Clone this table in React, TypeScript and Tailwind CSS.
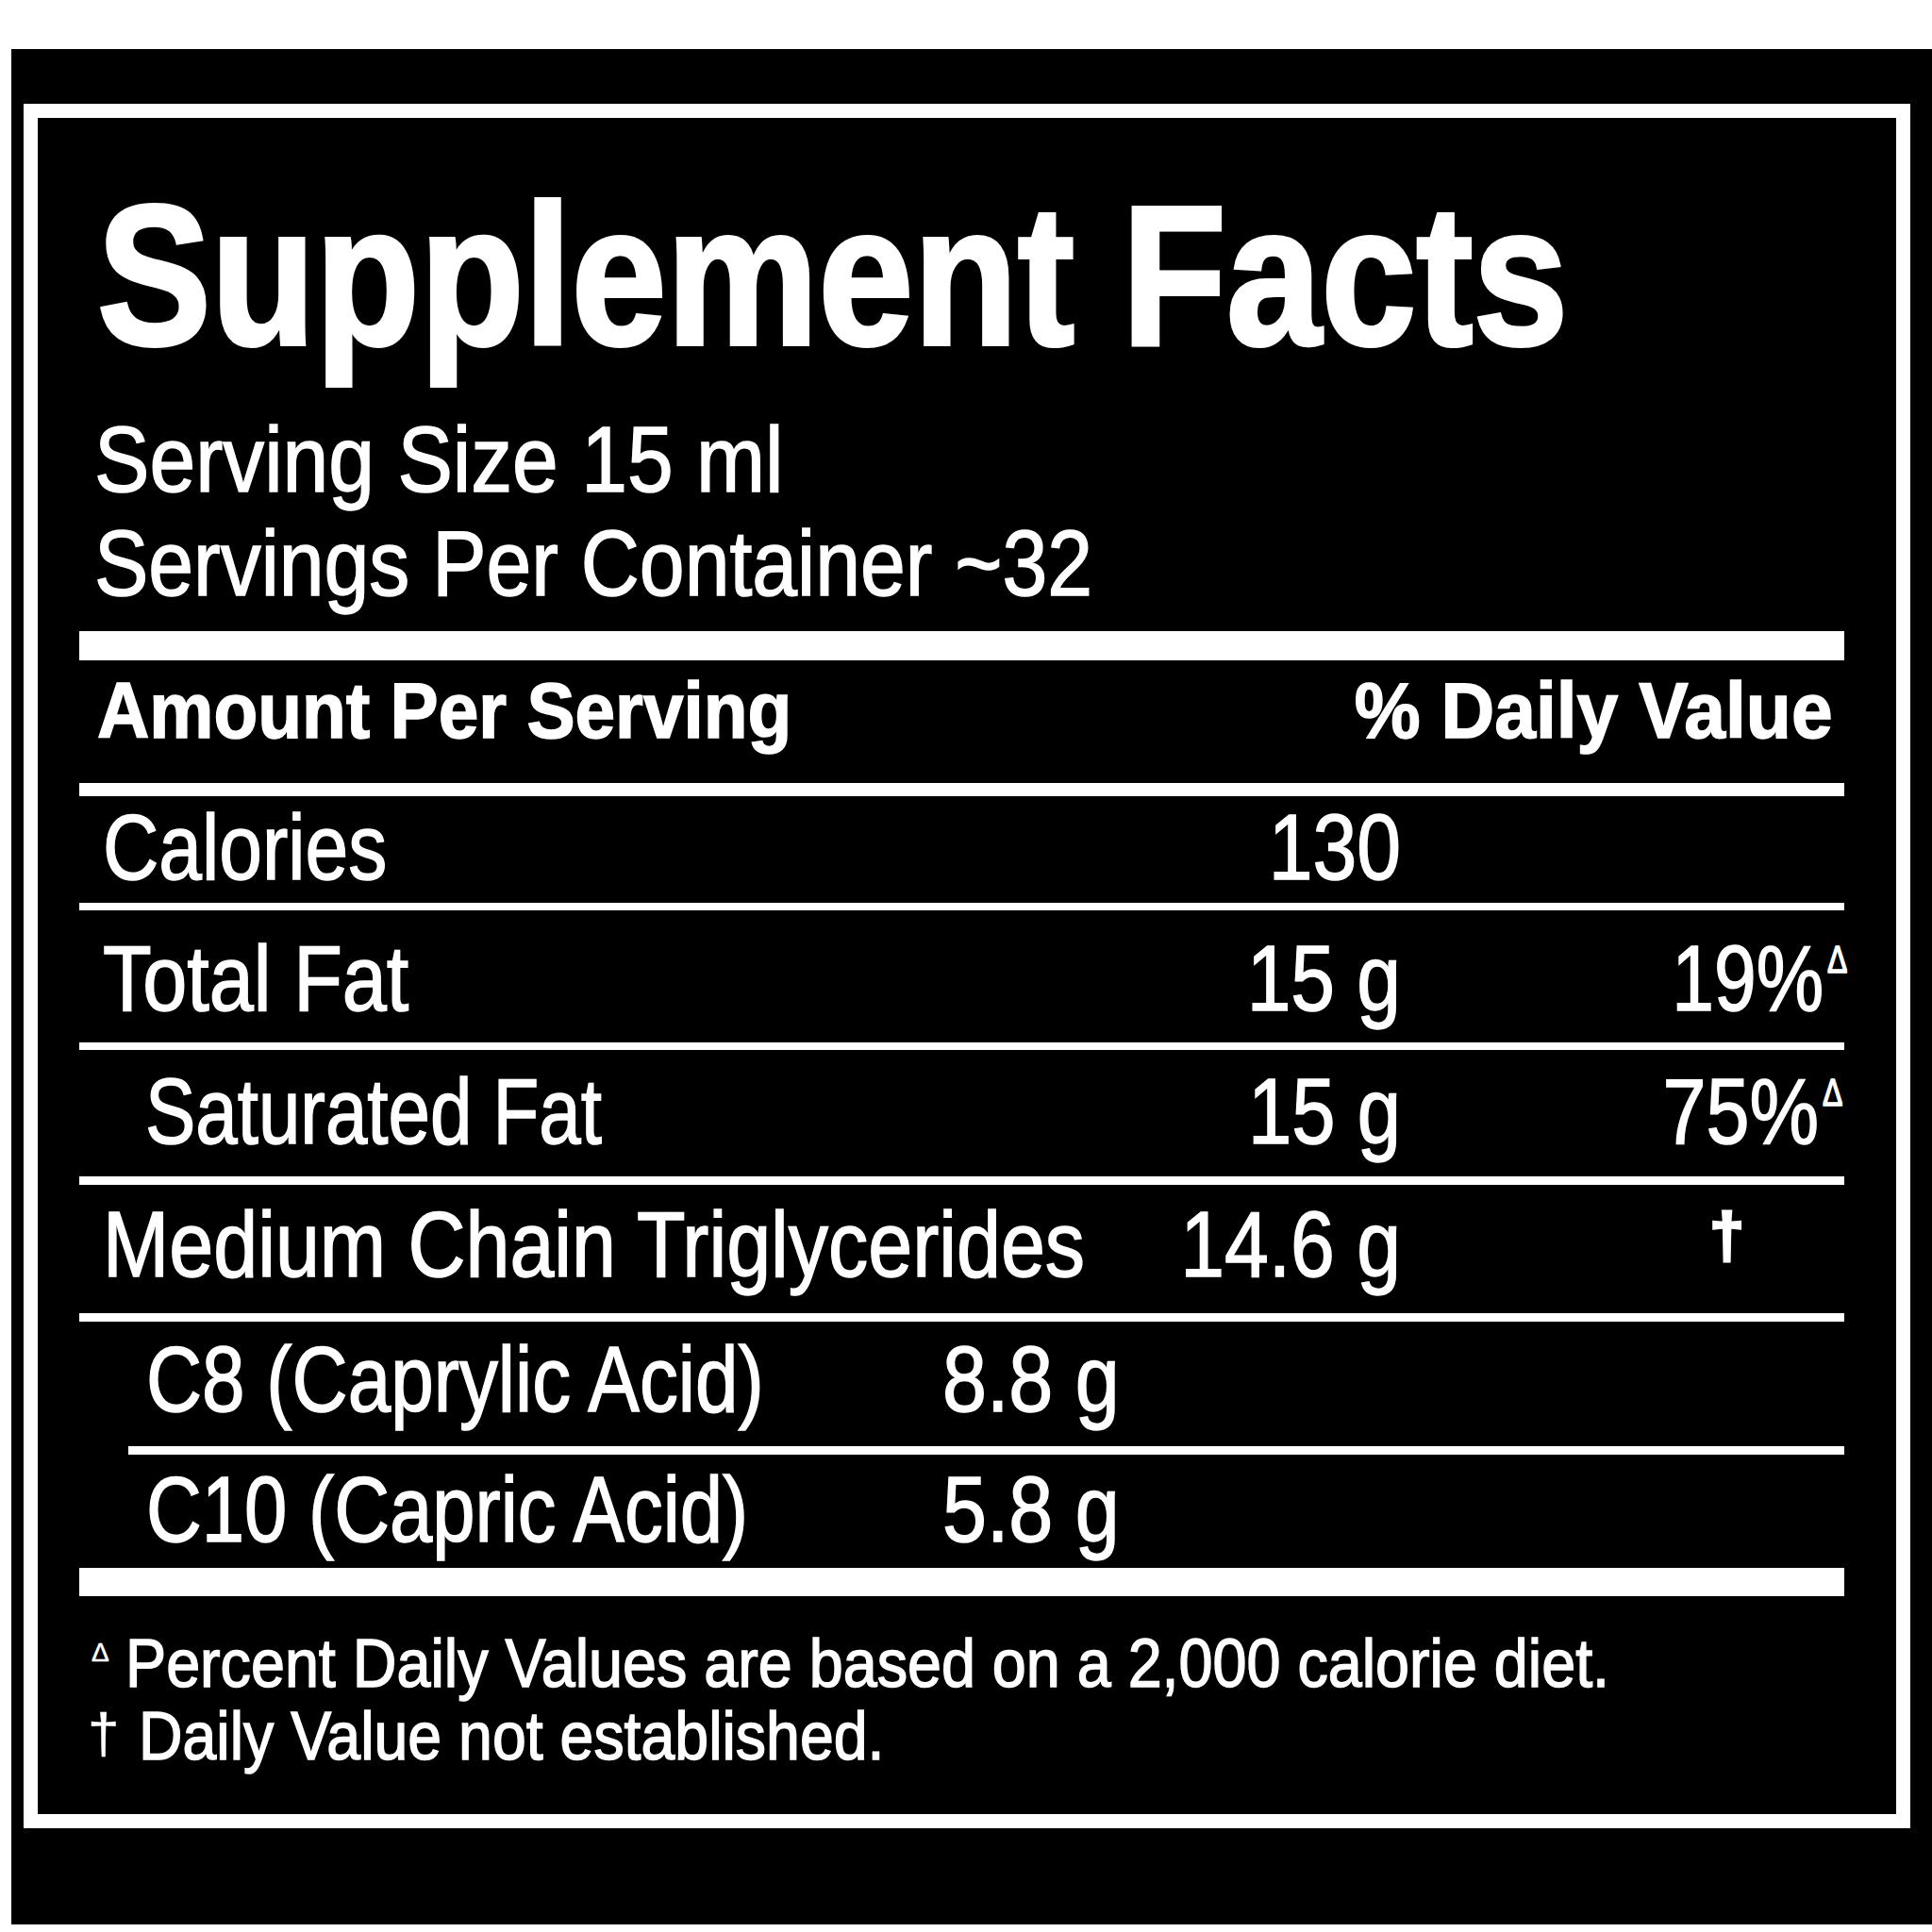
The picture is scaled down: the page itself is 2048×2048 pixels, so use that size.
import type { ReactNode } from 'react';

const font = "font-['Liberation_Sans_Narrow','Arial_Narrow','Liberation_Sans',sans-serif]";

function Rule({ className }: { className: string }) {
  return <div className={`bg-white ${className}`} />;
}

// name column shrinks to its slot; the text is squeezed horizontally to look condensed
function Row({
  className,
  name,
  nameScale,
  amount,
  amountScale,
  children,
}: {
  className: string;
  name: string;
  nameScale: string;
  amount: string;
  amountScale: string;
  children?: ReactNode;
}) {
  return (
    <div className={`flex items-start text-[98px] leading-none whitespace-nowrap ${className}`}>
      <span className={`flex-1 min-w-0 origin-left ${nameScale}`}>{name}</span>
      <span className={`w-[300px] text-right origin-right ${amountScale}`}>{amount}</span>
      <div className="w-[470px] flex justify-end items-start">{children}</div>
    </div>
  );
}

function SubRow({
  className,
  name,
  nameScale,
  amount,
}: {
  className: string;
  name: string;
  nameScale: string;
  amount: string;
}) {
  return (
    <div className={`flex items-start pl-[71px] text-[98px] leading-none whitespace-nowrap ${className}`}>
      <span className={`w-[844px] origin-left ${nameScale}`}>{name}</span>
      <span className="origin-left scale-x-[0.861]">{amount}</span>
    </div>
  );
}

function Delta({ className }: { className: string }) {
  return (
    <span className={`w-[20px] text-[40px] leading-none mt-[9px] ml-[4px] origin-left scale-x-[0.8] ${className}`}>
      Δ
    </span>
  );
}

export default function App() {
  return (
    <div className="w-[2048px] h-[2048px] bg-white pt-[52px] pl-[12px]">
      <div className="w-[2036px] h-[1988px] bg-black pt-[58px] pl-[13px]">
        <div
          className={`w-[2000px] h-[1828px] border-[15px] border-white text-white [-webkit-text-stroke:1.5px_white] ${font}`}
        >
          <div className="ml-[44px] w-[1871px]">
            {/* Header */}
            <h1 className="mt-[62px] ml-[19px] text-[211px] font-bold leading-none whitespace-nowrap origin-left scale-x-[0.858] [-webkit-text-stroke:4px_white]">
              Supplement Facts
            </h1>
            <div className="mt-[34px] pl-[16px] text-[99px] leading-[110px] whitespace-nowrap">
              <p className="origin-left scale-x-[0.885]">Serving Size 15 ml</p>
              <p className="origin-left scale-x-[0.868]">Servings Per Container ~32</p>
            </div>

            <Rule className="mt-[17px] h-[31px]" />
            <div className="h-[130px] pt-[11px] pl-[19px] pr-[12px] flex justify-between items-start text-[84px] font-bold leading-none whitespace-nowrap">
              <span className="origin-left scale-x-[0.912]">Amount Per Serving</span>
              <span className="origin-right scale-x-[0.936]">% Daily Value</span>
            </div>
            <Rule className="h-[14px]" />

            {/* Rows */}
            <Row
              className="h-[113px] pt-[5px] pl-[25px]"
              name="Calories"
              nameScale="scale-x-[0.838]"
              amount="130"
              amountScale="scale-x-[0.858]"
            />
            <Rule className="h-[8px]" />
            <Row
              className="h-[140px] pt-[23px] pl-[25px]"
              name="Total Fat"
              nameScale="scale-x-[0.863]"
              amount="15 g"
              amountScale="scale-x-[0.856]"
            >
              <span className="origin-right scale-x-[0.82]">19%</span>
              <Delta className="-mr-[2px]" />
            </Row>
            <Rule className="h-[8px]" />
            <Row
              className="h-[134px] pt-[16px] pl-[70px]"
              name="Saturated Fat"
              nameScale="scale-x-[0.815]"
              amount="15 g"
              amountScale="scale-x-[0.849]"
            >
              <span className="origin-right scale-x-[0.845]">75%</span>
              <Delta className="mr-[3px]" />
            </Row>
            <Rule className="h-[9px]" />
            <Row
              className="h-[136px] pt-[14px] pl-[25px]"
              name="Medium Chain Triglycerides"
              nameScale="scale-x-[0.861]"
              amount="14.6 g"
              amountScale="scale-x-[0.858]"
            >
              <span className="pr-[106px] text-[66px] font-bold leading-none mt-[6px] [-webkit-text-stroke:3px_white]">†</span>
            </Row>
            <Rule className="h-[9px]" />
            <SubRow className="h-[132px] pt-[12px]" name="C8 (Caprylic Acid)" nameScale="scale-x-[0.835]" amount="8.8 g" />
            <Rule className="ml-[52px] h-[9px]" />
            <SubRow className="h-[120px] pt-[9px]" name="C10 (Capric Acid)" nameScale="scale-x-[0.831]" amount="5.8 g" />
            <Rule className="h-[30px]" />

            {/* Footnotes */}
            <div className="mt-[33px] pl-[13px] text-[72px] leading-[77px] whitespace-nowrap">
              <div className="flex items-start">
                <span className="w-[36px] text-[28px] leading-none mt-[13px] [-webkit-text-stroke:0.5px_white]">Δ</span>
                <span className="origin-left scale-x-[0.898]">Percent Daily Values are based on a 2,000 calorie diet.</span>
              </div>
              <div className="flex items-start">
                <span className="w-[54px] -ml-[4px] text-[60px] leading-none mt-[6px] [-webkit-text-stroke:0.5px_white]">†</span>
                <span className="origin-left scale-x-[0.895]">Daily Value not established.</span>
              </div>
            </div>
          </div>
        </div>
      </div>
    </div>
  );
}
